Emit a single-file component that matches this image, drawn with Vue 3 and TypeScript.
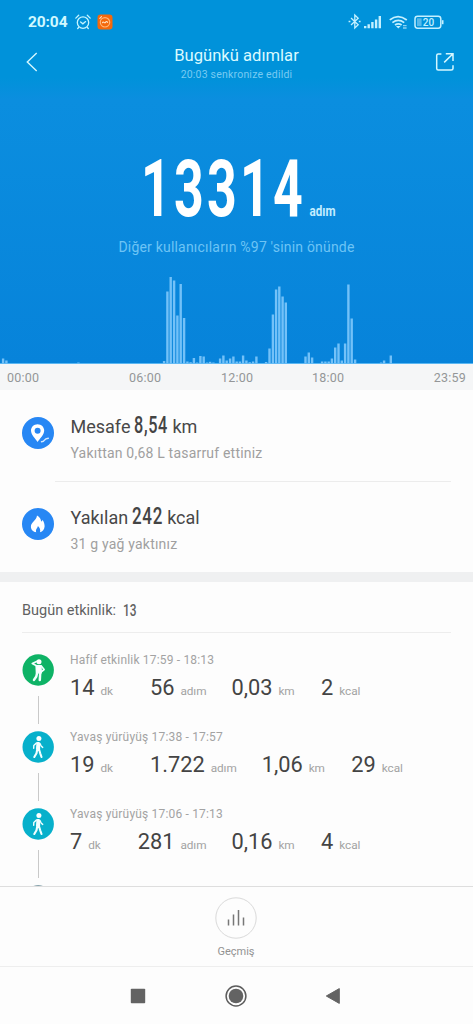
<script setup lang="ts">
interface Metric { value: string; unit: string }
interface Activity { title: string; kind: 'light' | 'walk'; metrics: Metric[] }

// Horizontal position and height of every step bar.
const bars: [number, number][] = [
  [3, 5], [6.3, 3], [78.3, 1], [164, 2.5], [167.3, 72], [170.6, 86.5], [174, 83], [177.3, 48], [180.6, 79.5], [184, 45.5],
  [187.3, 2], [190.5, 1.3], [193.8, 5.5], [197, 1], [200.3, 7.5], [203.6, 7], [207, 1], [210, 1.7], [213.3, 1],
  [220, 5], [223.3, 8], [226.6, 3], [230, 5], [233.3, 7], [236.6, 2], [239.8, 2], [243, 8], [246.3, 3], [249.6, 1.3],
  [253, 2], [256.3, 7], [266, 1.5], [269.4, 15], [272.8, 49], [276, 74], [279.2, 77], [282.5, 67], [285.7, 61],
  [305.4, 7], [308.7, 11], [312, 6], [322, 2], [325.3, 2], [328.6, 2], [331.8, 5], [335.1, 16], [338.4, 20],
  [341.7, 3], [345, 20], [348.3, 79], [351.6, 45], [355, 4], [381, 1], [384, 3], [390.7, 8],
]

const activities: Activity[] = [
  { title: 'Hafif etkinlik 17:59 - 18:13', kind: 'light', metrics: [
    { value: '14', unit: 'dk' }, { value: '56', unit: 'adım' }, { value: '0,03', unit: 'km' }, { value: '2', unit: 'kcal' }] },
  { title: 'Yavaş yürüyüş 17:38 - 17:57', kind: 'walk', metrics: [
    { value: '19', unit: 'dk' }, { value: '1.722', unit: 'adım' }, { value: '1,06', unit: 'km' }, { value: '29', unit: 'kcal' }] },
  { title: 'Yavaş yürüyüş 17:06 - 17:13', kind: 'walk', metrics: [
    { value: '7', unit: 'dk' }, { value: '281', unit: 'adım' }, { value: '0,16', unit: 'km' }, { value: '4', unit: 'kcal' }] },
]
</script>

<template>
  <div class="screen">
    <section class="hero">
      <div class="status">
        <span class="clock">20:04</span>
        <svg class="alarm" width="16" height="16" viewBox="0 0 16 16" fill="none" stroke="#c4f4ff" stroke-width="1.3" stroke-linecap="round">
          <circle cx="8" cy="8.6" r="5.7" /><path d="M5.6 8l2.3 1.8 2.7-2.2M.8 4.1L3.7 1.2M15.2 4.1l-2.9-2.9M3.6 13.5l-.9 1M12.4 13.5l.9 1" />
        </svg>
        <svg class="app" width="16" height="16" viewBox="0 0 16 16">
          <rect x=".5" y=".5" width="15" height="15" rx="3.2" fill="#f4680b" />
          <circle cx="8" cy="8.3" r="4.7" fill="none" stroke="#ffb77a" stroke-width="1.2" />
          <path d="M5.5 8.8q.6-1.3 1.5-.4t1.7-.3 1.9.3M2.8 4.3l1.7-1.6" fill="none" stroke="#ffe2c4" stroke-width="1.1" stroke-linecap="round" />
        </svg>
        <span class="grow"></span>
        <svg width="98" height="18" viewBox="0 0 98 18" fill="none" stroke="#c4f0ff">
          <path d="M3 5l7.2 6.8-3.4 3.2V2l3.4 3.2L3 12" stroke-width="1.3" />
          <path d="M.6 8.5h1.8M10.8 8.5h1.8" stroke-width="1.7" />
          <path d="M17.2 13v2.2M20.7 11.2v4M24.4 9v6.2M28.1 6.4v8.8M31.8 3v12.2" stroke-width="2.4" />
          <path d="M41.8 6.9q8-6.6 17 0M44.4 9.6q5.9-4.5 11.8 0M47 12.1q3.3-2.4 6.6 0" stroke-width="1.8" />
          <path d="M47.9 13h4.8l-2.4 2.6z" fill="#c4f0ff" stroke="none" />
          <path d="M55 12.6h3.6M55 15h3.6" stroke-width="1.4" opacity=".7" />
          <rect x="67" y="3.2" width="25.8" height="12" rx="2.6" stroke-width="1.5" />
          <rect x="69" y="5.3" width="4.6" height="7.8" fill="#58b9e9" stroke="none" />
          <path d="M94.7 7.2v4" stroke-width="1.6" />
          <text x="80.4" y="13" text-anchor="middle" class="battery">20</text>
        </svg>
      </div>
      <header class="nav">
        <svg width="12" height="20" viewBox="0 0 12 20" fill="none" stroke="#d3f7ff" stroke-width="1.4"><path d="M10.7 1L1.3 10l9.4 9" /></svg>
        <div class="heading"><h1>Bugünkü adımlar</h1><p>20:03 senkronize edildi</p></div>
        <svg width="20" height="20" viewBox="0 0 20 20" fill="none" stroke="#d3f7ff" stroke-width="1.5">
          <path d="M6.4 2H3.2Q1.7 2 1.7 3.5v13Q1.7 18 3.2 18h13q1.8 0 1.8-1.5v-3.3M10.8 1.8H18V9M9.2 10.4L18 1.8" />
        </svg>
      </header>
      <svg class="total" width="200" height="70" viewBox="0 0 200 70">
        <text x="0" y="61" class="steps" textLength="165" lengthAdjust="spacingAndGlyphs">13314</text>
        <text x="168.5" y="61" class="steps-unit" textLength="26" lengthAdjust="spacingAndGlyphs">adım</text>
      </svg>
      <p class="rank">Diğer kullanıcıların %97 'sinin önünde</p>
      <svg class="chart" width="473" height="94" viewBox="0 0 473 94">
        <rect x="0" y="93" width="473" height="1" fill="#5bb7f2" />
        <rect v-for="[x, h] in bars" :key="x" :x="x - 1.1" :y="93.5 - h" width="2.4" :height="h" fill="#73c1f8" />
      </svg>
    </section>
    <div class="axis"><span>00:00</span><span>06:00</span><span>12:00</span><span>18:00</span><span>23:59</span></div>

    <section class="summary">
      <article>
        <svg class="badge" width="32" height="32" viewBox="0 0 32 32">
          <circle cx="16" cy="16" r="16" fill="#2787f4" />
          <path fill-rule="evenodd" fill="#fff" d="M15.6 7.2c-3.7 0-6.6 2.8-6.6 6.4 0 4.4 4.6 8.2 6.6 11.4 2-3.2 6.6-7 6.6-11.4 0-3.6-2.9-6.4-6.6-6.4zm0 3.5a3 3 0 110 6 3 3 0 010-6z" />
          <path d="M19.5 24.8q2-.2 3-1.7t3.8-1.8" fill="none" stroke="#d6eaff" stroke-width="1.4" stroke-linecap="round" />
        </svg>
        <div>
          <h2>Mesafe <svg class="figure" width="34" height="22" viewBox="0 0 34 22"><text x="0" y="19" textLength="34" lengthAdjust="spacingAndGlyphs">8,54</text></svg> km</h2>
          <p>Yakıttan 0,68 L tasarruf ettiniz</p>
        </div>
      </article>
      <hr />
      <article>
        <svg class="badge" width="32" height="32" viewBox="0 0 32 32">
          <circle cx="16" cy="16" r="16" fill="#2787f4" />
          <path fill="#fff" d="M15 7.6c2.8 1.6 4 3.5 4.1 5.8 1-.3 1.3-1 1.4-1.7 1.3 2 2.3 4.6 2.1 6.9-.2 2.9-1.9 4.9-4.6 5.7.8-2.7-.4-4.6-2.1-6.3-.3 2.3-2.7 3.2-1.7 6.3-3-.6-5.3-2.7-5.3-5.6 0-4.4 5.6-6.1 6.1-11.1z" />
        </svg>
        <div>
          <h2>Yakılan <svg class="figure" width="31" height="22" viewBox="0 0 31 22"><text x="0" y="19" textLength="31" lengthAdjust="spacingAndGlyphs">242</text></svg> kcal</h2>
          <p>31 g yağ yaktınız</p>
        </div>
      </article>
    </section>

    <section class="activities">
      <h3>Bugün etkinlik: <svg width="14" height="16" viewBox="0 0 14 16"><text x="0" y="12.5" textLength="13.5" lengthAdjust="spacingAndGlyphs">13</text></svg></h3>
      <div v-for="a in activities" :key="a.title" class="activity">
        <div class="track">
          <svg width="32" height="32" viewBox="0 0 32 32" fill="none" stroke="#f2ffff" stroke-linecap="round" stroke-linejoin="round">
            <template v-if="a.kind === 'light'">
              <circle cx="16.2" cy="16" r="15.7" fill="#0eb366" stroke="none" />
              <circle cx="17" cy="7.7" r="2.5" fill="#fff" stroke="none" />
              <path d="M14.3 12h4.5l.3 6.7h-4.5z" fill="#fff" stroke-width="1.8" />
              <path d="M14.5 11.8l-4.2-2.4 4.3-2M19.3 12l2.8 3.5-2.5 2.1" stroke-width="1.7" />
              <path d="M15.1 19l-.8 3.5-2.3 3.4M18.2 19l-.4 7" stroke-width="2.5" />
            </template>
            <template v-else>
              <circle cx="16.2" cy="16" r="15.7" fill="#07b0cb" stroke="none" />
              <circle cx="16.9" cy="7.4" r="2.5" fill="#fff" stroke="none" />
              <path d="M15.5 12.2h1.4l.2 5.3h-2z" fill="#fff" stroke-width="2.2" />
              <path d="M14.4 12l-2.6 2.5-.1 2.8M18 12.6l1.3 2.7 1.4 1.1" stroke-width="1.4" />
              <path d="M15.3 18l-.8 4.2-2.2 3.8M17 18.3l1.2 4 1.3 3.7" stroke-width="2.1" />
            </template>
          </svg>
          <i></i>
        </div>
        <div class="detail">
          <p>{{ a.title }}</p>
          <div class="metrics"><span v-for="m in a.metrics" :key="m.unit"><b>{{ m.value }}</b><small>{{ m.unit }}</small></span></div>
        </div>
      </div>
      <div class="activity next">
        <div class="track"><svg width="32" height="32" viewBox="0 0 32 32"><circle cx="16.2" cy="16" r="15.7" fill="#5f8490" /></svg></div>
      </div>
    </section>

    <footer class="history">
      <svg width="42" height="42" viewBox="0 0 42 42" fill="none">
        <circle cx="21" cy="21" r="20.2" stroke="#dadada" />
        <path d="M13.5 22.5v6M18.5 17.5v11M23.5 13v15.5M28.5 20.5v8" stroke="#777" stroke-width="1.5" />
      </svg>
      <span>Geçmiş</span>
    </footer>
    <nav class="system">
      <svg width="16" height="16" viewBox="0 0 16 16"><rect x=".8" y=".8" width="14.4" height="14.4" rx=".8" fill="#636363" /></svg>
      <svg width="22" height="22" viewBox="0 0 22 22"><circle cx="11" cy="11" r="9.9" fill="none" stroke="#5d5d5d" stroke-width="1.5" /><circle cx="11" cy="11" r="7.3" fill="#636363" /></svg>
      <svg width="16" height="16" viewBox="0 0 16 16"><path d="M1.3 8L14.3.6v14.8z" fill="#636363" stroke="#636363" stroke-linejoin="round" /></svg>
    </nav>
  </div>
</template>

<style>
body { margin: 0; background: #fdfdfd; }
</style>

<style scoped>
* { box-sizing: border-box; }
h1, h2, h3, p { margin: 0; font-weight: 400; white-space: nowrap; }
svg { display: block; flex: none; overflow: visible; }
.screen { width: 473px; height: 1024px; overflow: hidden; display: flex; flex-direction: column; font-family: Roboto, "Noto Sans", sans-serif; background: #fdfdfd; color: #484848; }
.hero { height: 364px; flex: none; display: flex; flex-direction: column; background: linear-gradient(#0092da 0, #0092da 78px, #0b8edf 100px, #0783da 364px); }
.status { height: 44px; flex: none; display: flex; align-items: center; padding: 0 27px 0 28px; }
.clock { font-size: 15.5px; font-weight: 700; letter-spacing: -.1px; color: #cff8ff; width: 47px; }
.app { margin-left: 6px; }
.grow { flex: 1; }
.battery { font: 500 10px Roboto, sans-serif; fill: #c4f0ff; stroke: none; }
.nav { height: 44px; flex: none; display: flex; align-items: flex-start; justify-content: space-between; padding: 0 18px 0 26px; }
.nav > svg { margin-top: 8px; }
.heading { text-align: center; padding-top: 1px; }
.heading h1 { font-size: 16.6px; line-height: 22px; color: #dafaff; }
.heading p { font-size: 10.5px; line-height: 16px; letter-spacing: .2px; color: #78cbf2; }
.total { margin: 67px 0 0 141px; }
.steps { font: 700 80px Roboto, sans-serif; letter-spacing: 5px; fill: #fff; }
.steps-unit { font: 700 15px Roboto, sans-serif; fill: #c3edff; }
.rank { margin-top: 12px; text-align: center; font-size: 14px; line-height: 20px; letter-spacing: .2px; color: #6dc4f5; }
.chart { margin-top: auto; }
.axis { height: 26px; flex: none; background: #f5f6f7; display: grid; grid-template-columns: 122px 92px 91px 1fr auto; padding: 0 7px; font-size: 12.5px; line-height: 27px; letter-spacing: .2px; color: #949698; }
.summary { height: 182px; flex: none; }
.summary article { height: 91px; display: flex; padding: 27px 22px 0; }
.summary article > div { margin: -2px 0 0 16.5px; }
.summary hr { border: 0; height: 1px; background: #ececec; margin: 0 22px -1px 55px; }
.summary h2 { display: flex; align-items: baseline; gap: 4px; font-size: 18px; line-height: 24px; }
.summary h2 .figure { align-self: flex-start; margin-top: -1px; }
.figure text { font: 500 24px Roboto, sans-serif; letter-spacing: 1px; fill: #444; }
.summary p { font-size: 14px; line-height: 20px; margin-top: 4px; letter-spacing: .2px; color: #a0a0a0; }
.activities { height: 314px; flex: none; overflow: hidden; border-top: 10px solid #eff0f1; }
.activities h3 { height: 51px; margin: 0 22px 21px; border-bottom: 1px solid #ededed; display: flex; align-items: center; gap: 7px; padding-top: 7px; font-size: 14.5px; color: #616161; }
h3 text { font: 500 16px Roboto, sans-serif; fill: #616161; }
.activity { height: 77px; display: flex; padding-left: 22px; }
.track { width: 32px; display: flex; flex-direction: column; align-items: center; }
.track i { width: 1px; height: 28px; margin-top: 10px; background: #c9c9c9; }
.detail { margin-left: 16px; }
.detail p { font-size: 12px; line-height: 12px; letter-spacing: .18px; color: #a3a3a3; }
.metrics { display: flex; margin-top: 8px; line-height: 28px; }
.metrics span:nth-child(1) { margin-right: 37px; }
.metrics span:nth-child(2) { margin-right: 25px; }
.metrics span:nth-child(3) { margin-right: 26.5px; }
.metrics b { font-size: 21.8px; font-weight: 400; color: #444; }
.metrics small { font-size: 11.8px; margin-left: 6px; letter-spacing: -.1px; color: #a3a3a3; }
.history { height: 81px; flex: none; border-top: 1px solid #dedede; border-bottom: 1px solid #eee; display: flex; flex-direction: column; align-items: center; padding: 10px 1px 0 0; font-size: 11px; color: #929292; background: #fdfdfd; }
.history span { margin-top: 5px; line-height: 16px; }
.system { height: 57px; display: flex; align-items: center; justify-content: space-between; padding: 0 132px 0 130px; }
</style>
